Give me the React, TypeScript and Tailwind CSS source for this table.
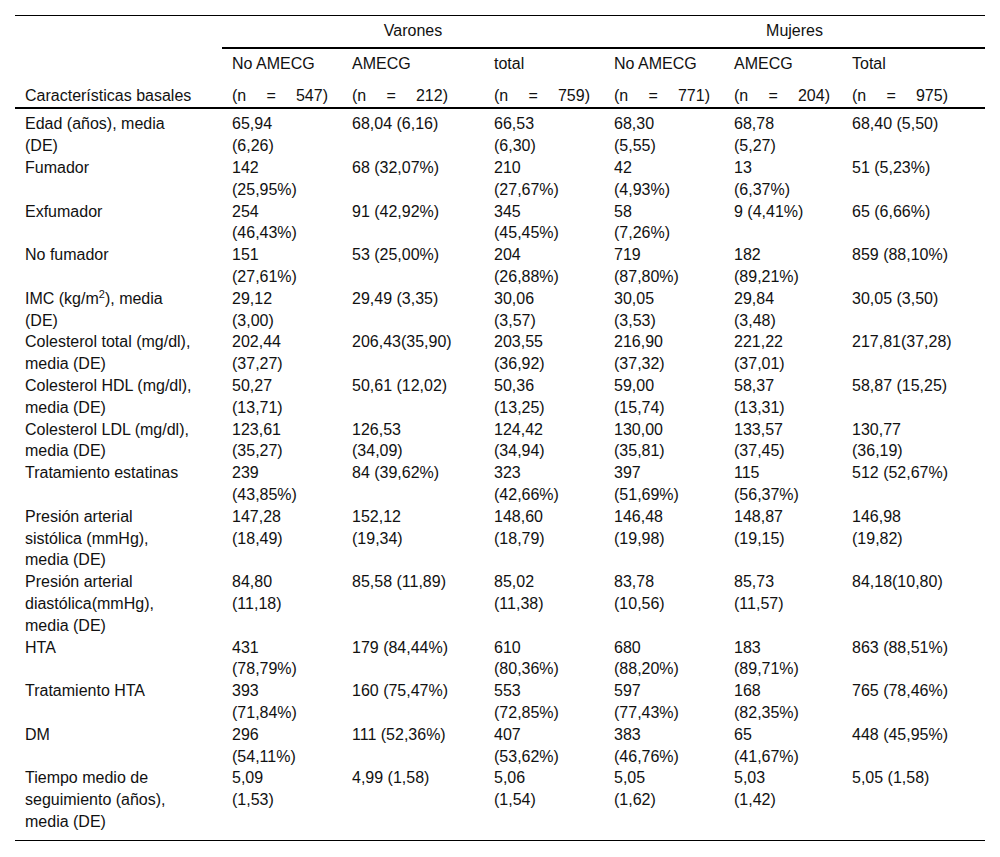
import React from "react";

const GRID = "grid grid-cols-[207px_120px_142px_120px_120px_118px_143px]";

const headers = [
  { name: "No AMECG", n: "547" },
  { name: "AMECG", n: "212" },
  { name: "total", n: "759" },
  { name: "No AMECG", n: "771" },
  { name: "AMECG", n: "204" },
  { name: "Total", n: "975" },
];

type Row = { label: React.ReactNode[]; cells: string[] };

const rows: Row[] = [
  { label: ["Edad (años), media", "(DE)"], cells: ["65,94|(6,26)", "68,04 (6,16)", "66,53|(6,30)", "68,30|(5,55)", "68,78|(5,27)", "68,40 (5,50)"] },
  { label: ["Fumador"], cells: ["142|(25,95%)", "68 (32,07%)", "210|(27,67%)", "42|(4,93%)", "13|(6,37%)", "51 (5,23%)"] },
  { label: ["Exfumador"], cells: ["254|(46,43%)", "91 (42,92%)", "345|(45,45%)", "58|(7,26%)", "9 (4,41%)", "65 (6,66%)"] },
  { label: ["No fumador"], cells: ["151|(27,61%)", "53 (25,00%)", "204|(26,88%)", "719|(87,80%)", "182|(89,21%)", "859 (88,10%)"] },
  {
    label: [
      <>
        IMC (kg/m<sup className="text-[11px] leading-none align-baseline top-[-6px]">2</sup>), media
      </>,
      "(DE)",
    ],
    cells: ["29,12|(3,00)", "29,49 (3,35)", "30,06|(3,57)", "30,05|(3,53)", "29,84|(3,48)", "30,05 (3,50)"],
  },
  { label: ["Colesterol total (mg/dl),", "media (DE)"], cells: ["202,44|(37,27)", "206,43(35,90)", "203,55|(36,92)", "216,90|(37,32)", "221,22|(37,01)", "217,81(37,28)"] },
  { label: ["Colesterol HDL (mg/dl),", "media (DE)"], cells: ["50,27|(13,71)", "50,61 (12,02)", "50,36|(13,25)", "59,00|(15,74)", "58,37|(13,31)", "58,87 (15,25)"] },
  { label: ["Colesterol LDL (mg/dl),", "media (DE)"], cells: ["123,61|(35,27)", "126,53|(34,09)", "124,42|(34,94)", "130,00|(35,81)", "133,57|(37,45)", "130,77|(36,19)"] },
  { label: ["Tratamiento estatinas"], cells: ["239|(43,85%)", "84 (39,62%)", "323|(42,66%)", "397|(51,69%)", "115|(56,37%)", "512 (52,67%)"] },
  { label: ["Presión arterial", "sistólica (mmHg),", "media (DE)"], cells: ["147,28|(18,49)", "152,12|(19,34)", "148,60|(18,79)", "146,48|(19,98)", "148,87|(19,15)", "146,98|(19,82)"] },
  { label: ["Presión arterial", "diastólica(mmHg),", "media (DE)"], cells: ["84,80|(11,18)", "85,58 (11,89)", "85,02|(11,38)", "83,78|(10,56)", "85,73|(11,57)", "84,18(10,80)"] },
  { label: ["HTA"], cells: ["431|(78,79%)", "179 (84,44%)", "610|(80,36%)", "680|(88,20%)", "183|(89,71%)", "863 (88,51%)"] },
  { label: ["Tratamiento HTA"], cells: ["393|(71,84%)", "160 (75,47%)", "553|(72,85%)", "597|(77,43%)", "168|(82,35%)", "765 (78,46%)"] },
  { label: ["DM"], cells: ["296|(54,11%)", "111 (52,36%)", "407|(53,62%)", "383|(46,76%)", "65|(41,67%)", "448 (45,95%)"] },
  { label: ["Tiempo medio de", "seguimiento (años),", "media (DE)"], cells: ["5,09|(1,53)", "4,99 (1,58)", "5,06|(1,54)", "5,05|(1,62)", "5,03|(1,42)", "5,05 (1,58)"] },
];

export default function App() {
  return (
    <div className="min-h-[857px] bg-white pt-[15px] font-['Liberation_Sans',Arial,sans-serif] text-[16px] leading-[21.8px] text-[#111]">
      <div className="ml-[15px] w-[970px] border-t border-black">
        <div className="flex">
          <div className="w-[207px]" />
          <div className="flex flex-1 border-b-2 border-black pt-[4px] pb-[5px]">
            <div className="w-[382px] text-center">Varones</div>
            <div className="flex-1 text-center">Mujeres</div>
          </div>
        </div>
        <div className={GRID + " border-b-2 border-black pt-[4px] pb-[1px]"}>
          <div className="self-end pl-[10px]">Características basales</div>
          {headers.map((h, i) => (
            <div key={i} className="pl-[10px]">
              <div>{h.name}</div>
              <div className="mt-[10px] flex w-[96px] justify-between whitespace-nowrap">
                <span>(n</span>
                <span>=</span>
                <span>{h.n})</span>
              </div>
            </div>
          ))}
        </div>
        <div className={GRID + " border-b border-black pt-[4px] pb-[7px]"}>
          {rows.map((r, ri) => (
            <React.Fragment key={ri}>
              <div className="pl-[10px] whitespace-nowrap">
                {r.label.map((l, li) => (
                  <div key={li}>{l}</div>
                ))}
              </div>
              {r.cells.map((c, ci) => (
                <div key={ci} className="pl-[10px] whitespace-nowrap">
                  {c.split("|").map((t, ti) => (
                    <div key={ti}>{t}</div>
                  ))}
                </div>
              ))}
            </React.Fragment>
          ))}
        </div>
      </div>
    </div>
  );
}
